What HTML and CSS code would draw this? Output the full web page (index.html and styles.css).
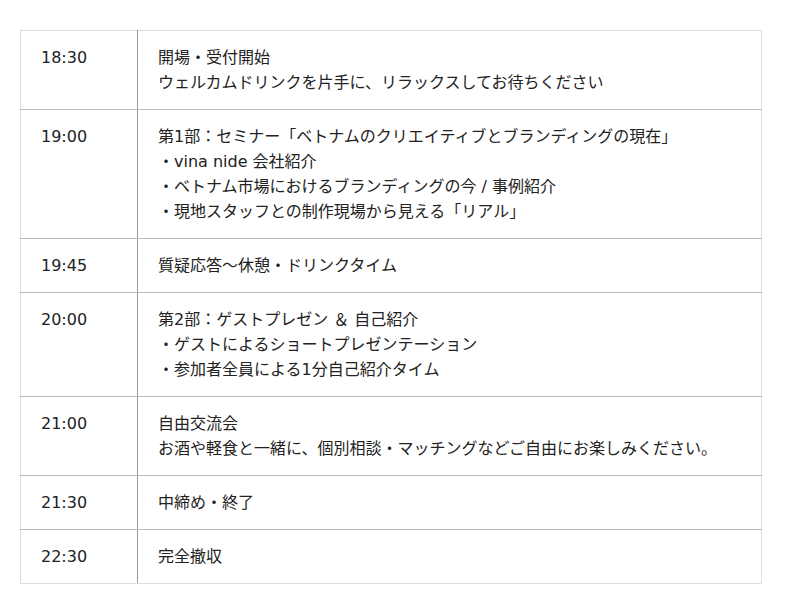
FILE: index.html
```html
<!DOCTYPE html>
<html lang="ja">
<head>
<meta charset="utf-8">
<link rel="stylesheet" href="styles.css">
</head>
<body>
<div class="wrap">
<table class="schedule">
<tbody>
<tr><td class="time">18:30</td><td class="desc">開場・受付開始<br>ウェルカムドリンクを片手に、リラックスしてお待ちください</td></tr>
<tr><td class="time">19:00</td><td class="desc">第1部：セミナー「ベトナムのクリエイティブとブランディングの現在」<br>・vina nide 会社紹介<br>・ベトナム市場におけるブランディングの今 / 事例紹介<br>・現地スタッフとの制作現場から見える「リアル」</td></tr>
<tr><td class="time">19:45</td><td class="desc">質疑応答〜休憩・ドリンクタイム</td></tr>
<tr><td class="time">20:00</td><td class="desc">第2部：ゲストプレゼン ＆ 自己紹介<br>・ゲストによるショートプレゼンテーション<br>・参加者全員による1分自己紹介タイム</td></tr>
<tr><td class="time">21:00</td><td class="desc">自由交流会<br>お酒や軽食と一緒に、個別相談・マッチングなどご自由にお楽しみください。</td></tr>
<tr><td class="time">21:30</td><td class="desc">中締め・終了</td></tr>
<tr><td class="time">22:30</td><td class="desc">完全撤収</td></tr>
</tbody>
</table>
</div>
</body>
</html>
```
FILE: styles.css
```css
html, body {
  margin: 0;
  padding: 0;
  background: #fff;
}
.wrap {
  padding: 30px 20px;
}
.schedule {
  width: 742px;
  border-collapse: collapse;
  border: 1px solid #ddd;
  font-family: "DejaVu Sans", "Noto Sans CJK JP", sans-serif;
  font-size: 16px;
  line-height: 25px;
  color: #222;
}
.schedule td {
  padding: 14px 20px;
  vertical-align: top;
  border-bottom: 1px solid #bbb;
  text-align: left;
}
.schedule tr:last-child td {
  border-bottom: 1px solid #ddd;
}
.schedule .time {
  width: 76px;
  border-right: 1px solid #999;
}
```
